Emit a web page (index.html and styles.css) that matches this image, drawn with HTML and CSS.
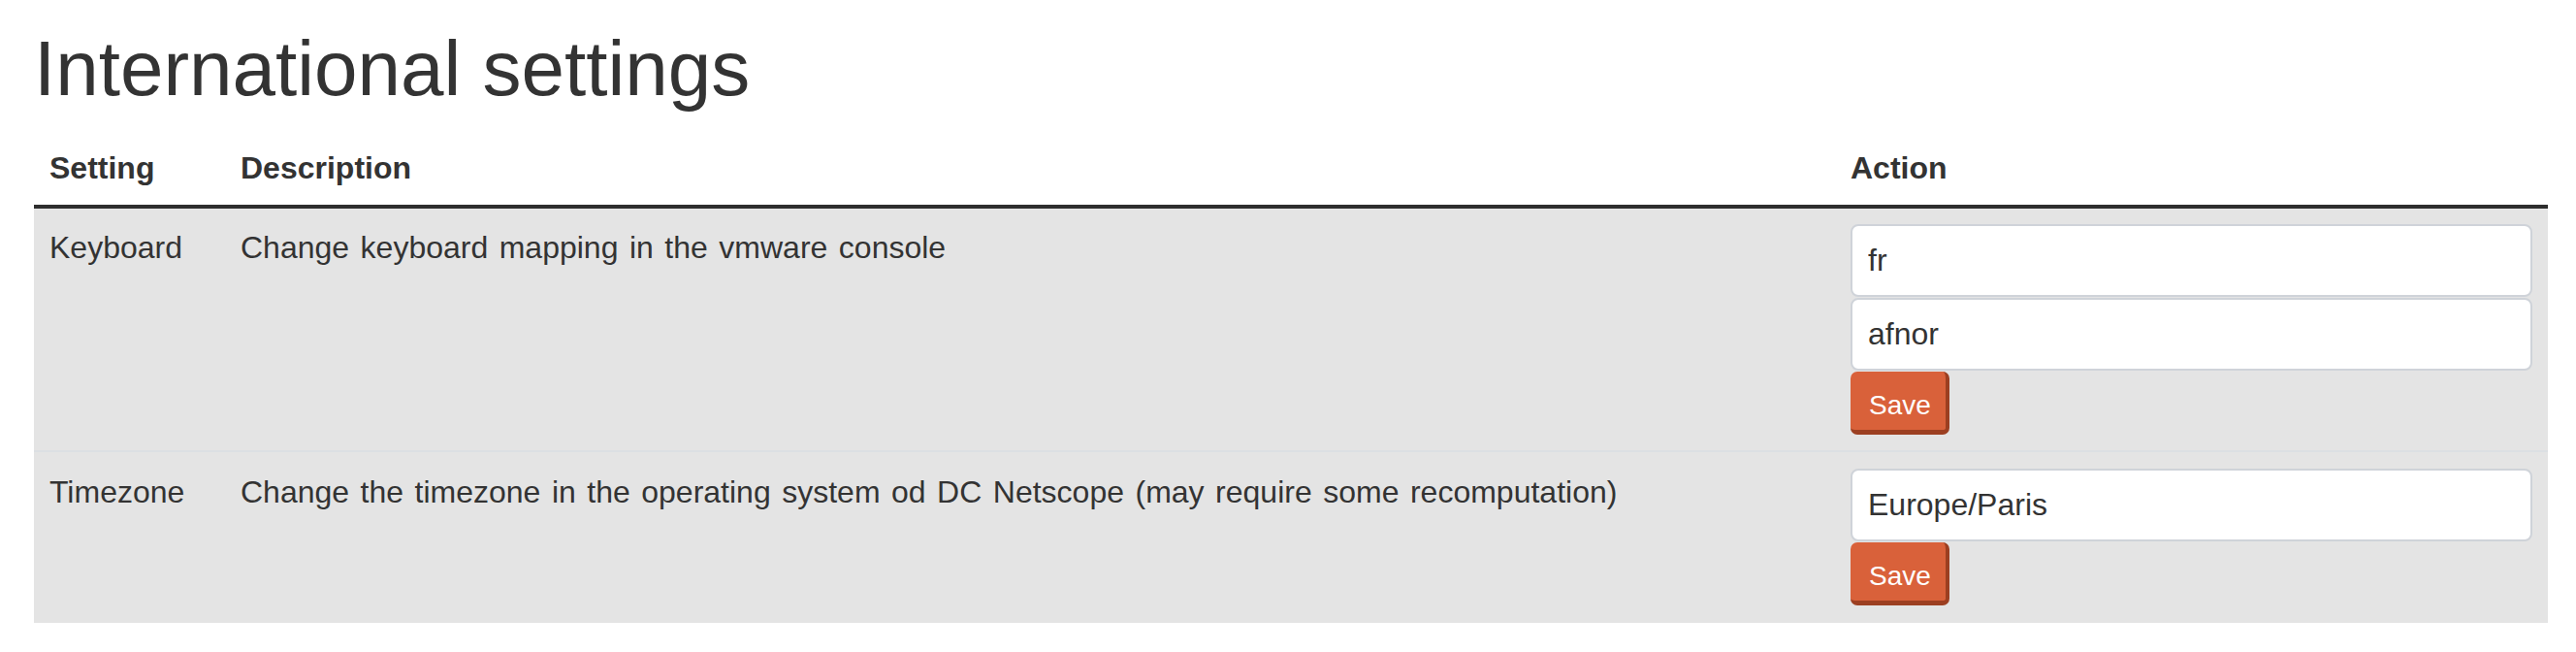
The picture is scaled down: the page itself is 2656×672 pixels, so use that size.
FILE: index.html
```html
<!DOCTYPE html>
<html lang="en">
<head>
<meta charset="utf-8">
<title>International settings</title>
<link rel="stylesheet" href="styles.css">
</head>
<body>
<div class="page">
  <h1 class="title">International settings</h1>
  <table class="settings">
    <colgroup>
      <col class="col-setting">
      <col class="col-desc">
      <col class="col-action">
    </colgroup>
    <thead>
      <tr>
        <th>Setting</th>
        <th>Description</th>
        <th>Action</th>
      </tr>
    </thead>
    <tbody>
      <tr>
        <td>Keyboard</td>
        <td>Change keyboard mapping in the vmware console</td>
        <td>
          <input class="field" type="text" value="fr">
          <input class="field" type="text" value="afnor">
          <button class="save" type="button">Save</button>
        </td>
      </tr>
      <tr class="sep">
        <td>Timezone</td>
        <td>Change the timezone in the operating system od DC Netscope (may require some recomputation)</td>
        <td>
          <input class="field" type="text" value="Europe/Paris">
          <button class="save" type="button">Save</button>
        </td>
      </tr>
    </tbody>
  </table>
</div>
</body>
</html>
```
FILE: styles.css
```css
* { box-sizing: border-box; }
html, body { margin: 0; padding: 0; background: #ffffff; }
body {
  font-family: "Liberation Sans", Arial, sans-serif;
  color: #333333;
  font-size: 32px;
  line-height: 48px;
}
.page {
  padding: 23px 29px 0 35px;
}
.title {
  margin: 0 0 12px 0;
  font-size: 80px;
  line-height: 96px;
  font-weight: 400;
  color: #333333;
}
.settings {
  width: 2592px;
  border-collapse: collapse;
  table-layout: fixed;
  word-spacing: 2.6px;
}
.col-setting { width: 197px; }
.col-desc { width: 1660px; }
.col-action { width: 735px; }
.settings th {
  text-align: left;
  font-weight: 700;
  padding: 18px 16px 14px 16px;
  border-bottom: 4px solid #2e2e2e;
  vertical-align: bottom;
}
.settings td {
  background: #e4e4e4;
  padding: 16px 16px 16px 16px;
  vertical-align: top;
}
.settings tr.sep td {
  border-top: 2px solid #dcdfe3;
  padding-top: 17px;
  padding-bottom: 18px;
}
.field {
  display: block;
  width: 100%;
  height: 75px;
  margin: 0 0 1px 0;
  padding: 0 16px;
  border: 2px solid #cfd3d9;
  border-radius: 8px;
  background: #ffffff;
  font-family: "Liberation Sans", Arial, sans-serif;
  font-size: 32px;
  color: #333333;
  outline: none;
}
.save {
  display: block;
  height: 65px;
  padding: 14px 15px 4px 19px;
  border: 0;
  border-right: 4px solid #9c3f21;
  border-bottom: 5px solid #9c3f21;
  border-radius: 7px;
  background: #d9613a;
  color: #ffffff;
  font-family: "Liberation Sans", Arial, sans-serif;
  font-size: 28px;
  line-height: 42px;
  cursor: pointer;
}
```
